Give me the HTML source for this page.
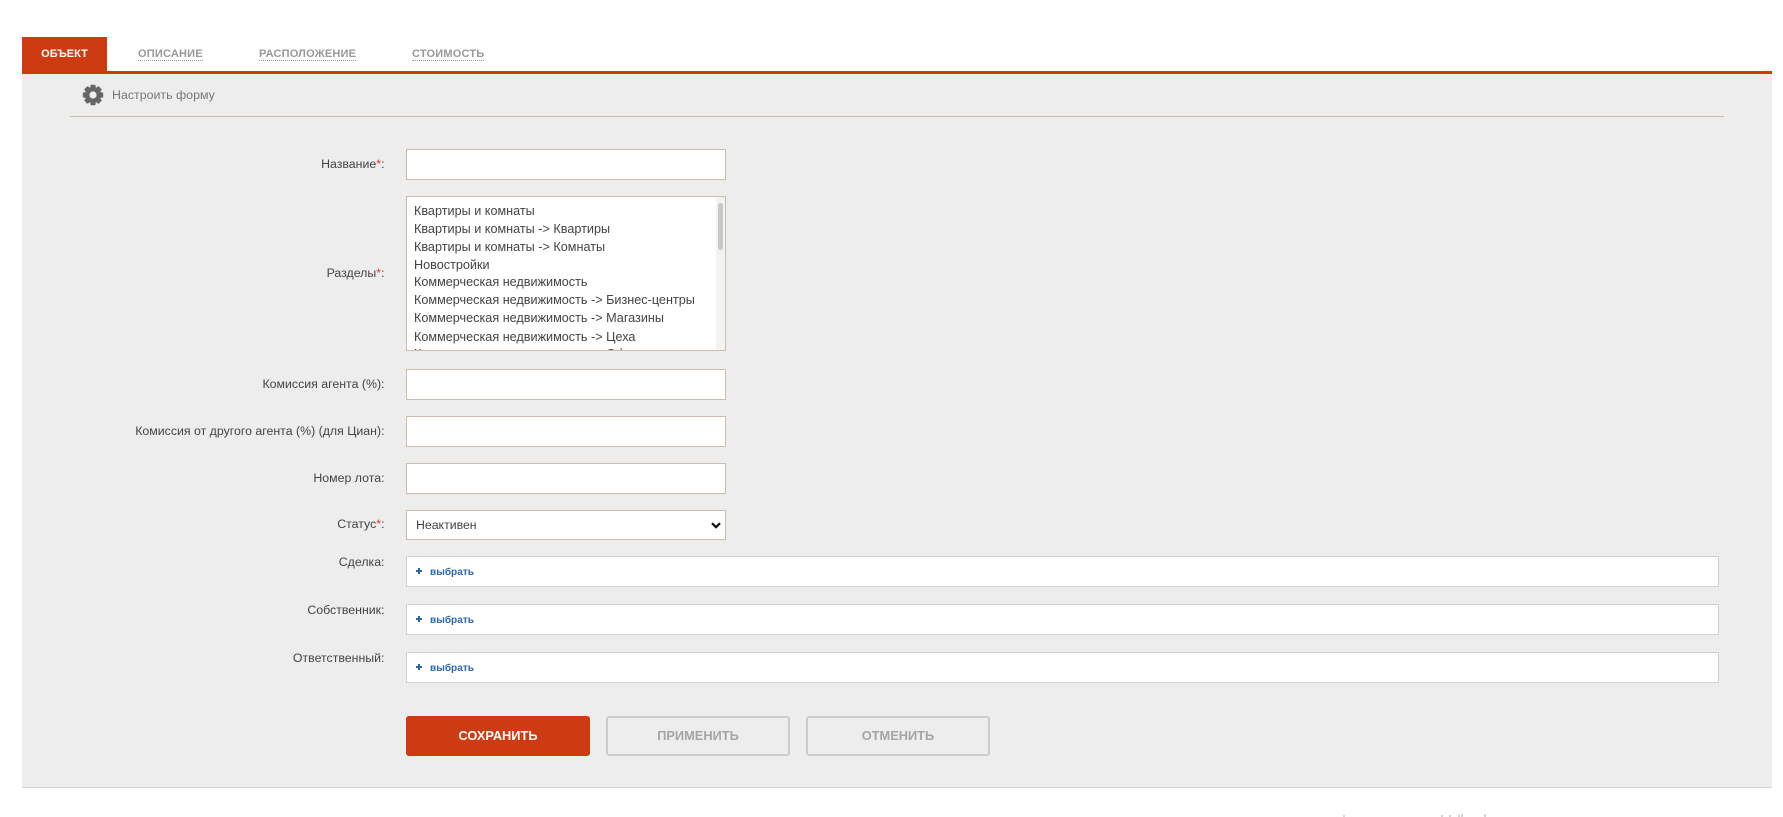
<!DOCTYPE html>
<html lang="ru"><head><meta charset="utf-8"><title>Объект</title>
<style>
html,body{margin:0;padding:0;background:#fff}
body{width:1783px;height:817px;position:relative;overflow:hidden;font-family:"Liberation Sans","DejaVu Sans",sans-serif;color:#444}
.a{position:absolute}
#panel{left:22px;top:74px;width:1750px;height:713px;background:#ededed;border-bottom:1px solid #d4d4d4}
#bar{left:22px;top:71px;width:1750px;height:3px;background:#ce3a12}
#tab{left:22px;top:37px;width:85px;height:34px;background:#ce3a12;color:#fff;font-weight:bold;font-size:11px;line-height:35px;text-align:center}
.t{top:48px;font-size:11px;letter-spacing:.2px;font-weight:bold;color:#999;line-height:12px;border-bottom:1px dotted #999;white-space:nowrap}
#cfg{left:112px;top:87px;font-size:12.4px;line-height:16px;color:#777;white-space:nowrap}
#hr{left:70px;top:116px;width:1654px;height:1px;background:#c9bda9}
.l{right:1398.5px;font-size:12.35px;line-height:16px;color:#444;white-space:nowrap;text-align:right}
.l i{color:#e33;font-style:normal}
.i{left:406px;width:318px;height:29px;background:#fff;border:1px solid #cbbfab}
#list{left:406px;top:196px;width:318px;height:153px;background:#fff;border:1px solid #cbbfab;overflow:hidden;font-size:12.65px;color:#444}
#list .o{position:absolute;left:7px;white-space:nowrap;line-height:18px;height:18px}
#sb{left:309px;top:0;width:9px;height:153px;background:#f3f3f3}
#th{left:311px;top:6px;width:5px;height:47px;background:#c8c8c8;border-radius:3px}
select{position:absolute;left:406px;top:510px;width:320px;height:30px;box-sizing:border-box;background:#fff;border:1px solid #cbbfab;border-radius:0;font-family:"Liberation Sans",sans-serif;font-size:12.3px;color:#444;padding:0 9px;outline:none;-webkit-appearance:none;appearance:none}
.b{left:406px;width:1311px;height:29px;background:#fff;border:1px solid #cdd3d9}
.p{position:absolute;left:9px;top:13px;width:6px;height:2px;background:#2a67b5}
.p:after{content:"";position:absolute;left:2px;top:-2px;width:2px;height:6px;background:#2a67b5}
.s{position:absolute;left:23px;top:8px;font-size:10.1px;line-height:15px;font-weight:bold;color:#2a67b5}
.btn{top:716px;width:184px;height:40px;box-sizing:border-box;border-radius:3px;text-align:center;font-weight:bold;font-size:12.8px;line-height:36px;border:2px solid #cccccc;color:#a5a5a5}
.f{top:815px;height:2px;width:2px;background:#d4d4d4}
</style></head><body>
<div class="a" id="panel"></div>
<div class="a" id="bar"></div>
<div class="a" id="tab">ОБЪЕКТ</div>
<div class="a t" style="left:138px">ОПИСАНИЕ</div>
<div class="a t" style="left:259px">РАСПОЛОЖЕНИЕ</div>
<div class="a t" style="left:412px">СТОИМОСТЬ</div>

<svg class="a" style="left:82px;top:84px" width="22" height="22" viewBox="0 0 22 22">
<g fill="#666"><circle cx="11" cy="11" r="8.2"/>
<rect x="8.4" y="0.8" width="5.2" height="20.4" rx="1"/>
<rect x="8.4" y="0.8" width="5.2" height="20.4" rx="1" transform="rotate(45 11 11)"/>
<rect x="8.4" y="0.8" width="5.2" height="20.4" rx="1" transform="rotate(90 11 11)"/>
<rect x="8.4" y="0.8" width="5.2" height="20.4" rx="1" transform="rotate(135 11 11)"/></g>
<circle cx="11" cy="11" r="3.6" fill="#ededed"/></svg>
<div class="a" id="cfg">Настроить форму</div>
<div class="a" id="hr"></div>

<div class="a l" style="top:156px">Название<i>*</i>:</div>
<div class="a i" style="top:149px"></div>

<div class="a l" style="top:265px">Разделы<i>*</i>:</div>
<div class="a" id="list">
<div class="o" style="top:5px">Квартиры и комнаты</div>
<div class="o" style="top:23px">Квартиры и комнаты -&gt; Квартиры</div>
<div class="o" style="top:41px">Квартиры и комнаты -&gt; Комнаты</div>
<div class="o" style="top:59px">Новостройки</div>
<div class="o" style="top:76px">Коммерческая недвижимость</div>
<div class="o" style="top:94px">Коммерческая недвижимость -&gt; Бизнес-центры</div>
<div class="o" style="top:112px">Коммерческая недвижимость -&gt; Магазины</div>
<div class="o" style="top:131px">Коммерческая недвижимость -&gt; Цеха</div>
<div class="o" style="top:148px">Коммерческая недвижимость -&gt; Офисы</div>
<div class="a" id="sb"></div><div class="a" id="th"></div>
</div>

<div class="a l" style="top:376px">Комиссия агента (%):</div>
<div class="a i" style="top:369px"></div>
<div class="a l" style="top:423px">Комиссия от другого агента (%) (для Циан):</div>
<div class="a i" style="top:416px"></div>
<div class="a l" style="top:470px">Номер лота:</div>
<div class="a i" style="top:463px"></div>
<div class="a l" style="top:516px">Статус<i>*</i>:</div>
<select><option>Неактивен</option></select>
<svg class="a" style="left:711px;top:522px" width="10" height="7" viewBox="0 0 10 7"><path d="M1 1.2 L5 5.2 L9 1.2" fill="none" stroke="#111" stroke-width="2.2"/></svg>

<div class="a l" style="top:554px">Сделка:</div>
<div class="a b" style="top:556px"><span class="p"></span><span class="s">выбрать</span></div>
<div class="a l" style="top:602px">Собственник:</div>
<div class="a b" style="top:604px"><span class="p"></span><span class="s">выбрать</span></div>
<div class="a l" style="top:650px">Ответственный:</div>
<div class="a b" style="top:652px"><span class="p"></span><span class="s">выбрать</span></div>

<div class="a btn" style="left:406px;background:#ce3a12;border-color:#ce3a12;color:#fff">СОХРАНИТЬ</div>
<div class="a btn" style="left:606px">ПРИМЕНИТЬ</div>
<div class="a btn" style="left:806px">ОТМЕНИТЬ</div>

<div class="a f" style="left:1343px"></div>
<div class="a f" style="left:1441px"></div>
<div class="a f" style="left:1449px"></div>
<div class="a f" style="left:1458px"></div>
<div class="a f" style="left:1461px;top:814px;height:3px"></div>
<div class="a f" style="left:1484px;top:814px;height:3px"></div>
</body></html>
